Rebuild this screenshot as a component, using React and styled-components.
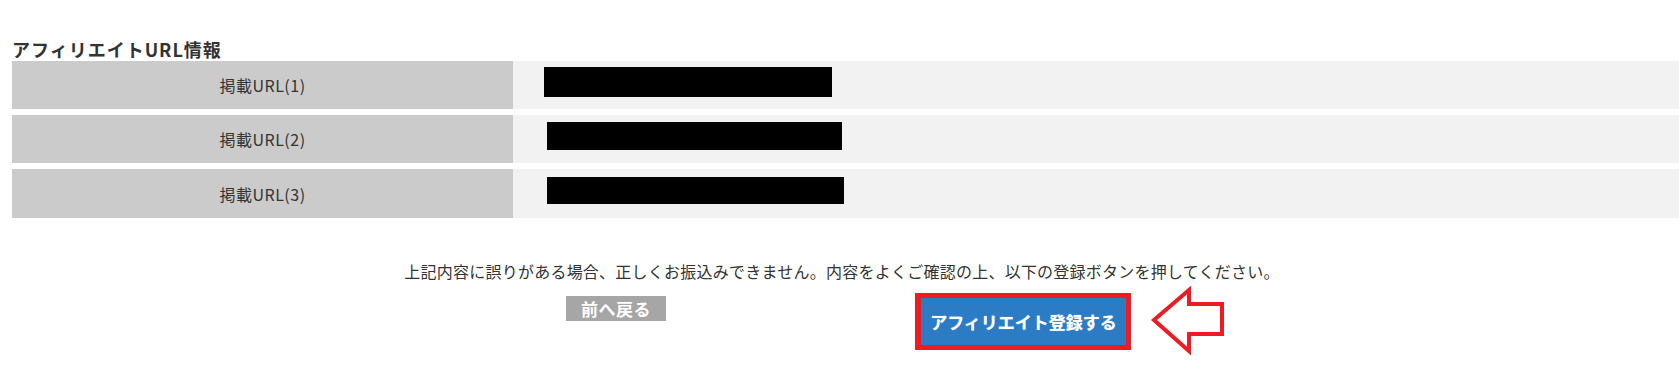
import React from 'react';
import styled, {createGlobalStyle} from 'styled-components';

const GlobalStyle = createGlobalStyle`
  html, body {
    margin: 0;
    padding: 0;
    background: #fff;
  }
  body {
    font-family: "Noto Sans CJK JP", "Noto Sans", sans-serif;
    color: #333;
  }
`;

const Page = styled.div`
  width: 1679px;
  height: 387px;
  padding-top: 37px;
  box-sizing: border-box;
`;

const Section = styled.section`
  padding-left: 12px;
`;

const Title = styled.h3`
  margin: 0;
  font-size: 18px;
  font-weight: bold;
  line-height: 24px;
  letter-spacing: 1px;
  color: #333;
`;

const Table = styled.div`
  display: flex;
  flex-direction: column;
  gap: 6px;
`;

const Row = styled.div`
  display: flex;
  height: ${p => p.h || 48}px;
`;

const Label = styled.div`
  width: 501px;
  flex: none;
  background: #cbcbcb;
  display: flex;
  align-items: center;
  justify-content: center;
  font-size: 16px;
  letter-spacing: 0.5px;
  color: #333;
`;

const Value = styled.div`
  flex: 1;
  background: #f2f2f2;
  display: flex;
  align-items: flex-start;
`;

// blacked-out url
const Redaction = styled.div`
  background: #000;
  margin-top: ${p => p.top}px;
  margin-left: ${p => p.left}px;
  width: ${p => p.w}px;
  height: ${p => p.h}px;
`;

const Notice = styled.p`
  margin: 41px 0 0;
  padding-left: 5px;
  text-align: center;
  font-size: 16px;
  line-height: 24px;
  letter-spacing: 0.24px;
  color: #333;
`;

const Buttons = styled.div`
  display: flex;
  align-items: flex-start;
  margin-top: 10px;
  padding-left: 566px;
`;

const BackButton = styled.button`
  margin-top: 3px;
  width: 100px;
  height: 25px;
  border: none;
  padding: 0;
  background: #a6a6a6;
  color: #fff;
  font-family: inherit;
  font-size: 17px;
  font-weight: bold;
  letter-spacing: 0.5px;
  line-height: 25px;
`;

const SubmitFrame = styled.div`
  margin-left: 249px;
  border: 5px solid #ec1c24;
  border-left-width: 6px;
`;

const SubmitButton = styled.button`
  display: block;
  width: 205px;
  height: 47px;
  border: none;
  padding: 0;
  background: #2b7cc4;
  color: #fff;
  font-family: inherit;
  font-size: 17px;
  font-weight: bold;
  text-shadow: 0 0 1px rgba(255, 255, 255, 0.6);
`;

const Arrow = styled.svg`
  margin-left: 17px;
  margin-top: -7px;
`;

const urls = [
    {label: '掲載URL(1)', top: 6, left: 31, w: 288, h: 30},
    {label: '掲載URL(2)', top: 7, left: 34, w: 295, h: 28},
    {label: '掲載URL(3)', top: 8, left: 34, w: 297, h: 27, rowH: 49},
];

const App = () => {
    return (
        <Page>
            <GlobalStyle/>
            <Section>
                <Title>アフィリエイトURL情報</Title>
                <Table>
                    {urls.map(u =>
                        <Row key={u.label} h={u.rowH}>
                            <Label>{u.label}</Label>
                            <Value>
                                <Redaction top={u.top} left={u.left} w={u.w} h={u.h}/>
                            </Value>
                        </Row>
                    )}
                </Table>
            </Section>
            <Notice>上記内容に誤りがある場合、正しくお振込みできません。内容をよくご確認の上、以下の登録ボタンを押してください。</Notice>
            <Buttons>
                <BackButton>前へ戻る</BackButton>
                <SubmitFrame>
                    <SubmitButton>アフィリエイト登録する</SubmitButton>
                </SubmitFrame>
                <Arrow width="80" height="70" viewBox="0 0 80 70">
                    <polygon
                        points="6,34 41,4 41,18 74,18 74,48 41,48 41,65"
                        fill="none"
                        stroke="#ec1c24"
                        strokeWidth="4"
                        strokeLinejoin="miter"
                    />
                </Arrow>
            </Buttons>
        </Page>
    );
};

export default App;
